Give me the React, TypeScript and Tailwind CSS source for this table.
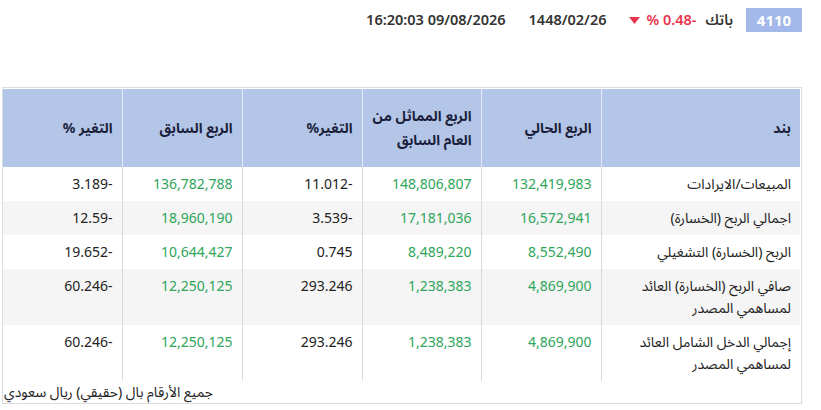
import React from "react";

const font = { fontFamily: '"Noto Sans", "Noto Sans Arabic", "DejaVu Sans", sans-serif' };

type Row = {
  label: string[];
  current: string;
  sameLastYear: string;
  changeYear: string;
  previous: string;
  changePrev: string;
};

const rows: Row[] = [
  { label: ["المبيعات/الايرادات"], current: "132,419,983", sameLastYear: "148,806,807", changeYear: "11.012-", previous: "136,782,788", changePrev: "3.189-" },
  { label: ["اجمالي الربح (الخسارة)"], current: "16,572,941", sameLastYear: "17,181,036", changeYear: "3.539-", previous: "18,960,190", changePrev: "12.59-" },
  { label: ["الربح (الخسارة) التشغيلي"], current: "8,552,490", sameLastYear: "8,489,220", changeYear: "0.745", previous: "10,644,427", changePrev: "19.652-" },
  { label: ["صافي الربح (الخسارة) العائد", "لمساهمي المصدر"], current: "4,869,900", sameLastYear: "1,238,383", changeYear: "293.246", previous: "12,250,125", changePrev: "60.246-" },
  { label: ["إجمالي الدخل الشامل العائد", "لمساهمي المصدر"], current: "4,869,900", sameLastYear: "1,238,383", changeYear: "293.246", previous: "12,250,125", changePrev: "60.246-" },
];

const th = "bg-[#b4c6e7] text-right align-middle px-[9px] font-bold text-[14px] leading-6 text-[#1b1f3b] border-l border-[#e4eaf6]";
const td = "text-right align-top px-[9px] py-[6px] text-[14px] leading-[22px] border-l border-[#dadada]";

function Num({ v, green }: { v: string; green?: boolean }) {
  return (
    <span dir="ltr" className={green ? "text-[#2ea55a]" : "text-[#222]"}>
      {v}
    </span>
  );
}

export default function App() {
  return (
    <div dir="rtl" className="w-[821px] h-[410px] bg-white pl-[2px] pr-[19px]" style={font}>
      {/* top bar */}
      <div className="flex items-center pt-2 h-8 text-[14.5px] text-[#333]">
        <div className="h-6 w-[56px] bg-[#a3b9ea] text-white font-bold text-[15px] flex items-center justify-center">
          4110
        </div>
        <span className="mr-[13px] font-semibold text-[#333]">باتك</span>
        <span dir="ltr" className="mr-[9px] font-semibold text-[#e8344e]">% 0.48-</span>
        <svg className="mr-[7px]" width="11" height="7" viewBox="0 0 11 7">
          <path d="M0 0 H11 L5.5 7 Z" fill="#e8344e" />
        </svg>
        <span dir="ltr" className="mr-[22px] font-semibold text-[#333]">1448/02/26</span>
        <span dir="ltr" className="mr-[23px] font-semibold text-[#333]">16:20:03 09/08/2026</span>
      </div>

      {/* table box */}
      <div className="mt-[55px] border border-[#dcdcdc] p-px">
        <table className="w-[797px] border-collapse table-fixed">
          <colgroup>
            <col className="w-[199px]" />
            <col className="w-[120px]" />
            <col className="w-[119px]" />
            <col className="w-[120px]" />
            <col className="w-[120px]" />
            <col className="w-[119px]" />
          </colgroup>
          <thead>
            <tr className="h-[78px]">
              <th className={th}>بند</th>
              <th className={th}>الربع الحالي</th>
              <th className={th}>
                الربع المماثل من
                <br />
                العام السابق
              </th>
              <th className={th}>التغير%</th>
              <th className={th}>الربع السابق</th>
              <th className={th + " border-l-0"}>التغير %</th>
            </tr>
          </thead>
          <tbody>
            {rows.map((r, i) => (
              <tr key={i} className={i % 2 === 1 ? "bg-[#f5f5f5]" : "bg-white"}>
                <td className={td + " text-[#222]"}>
                  {r.label.map((l, j) => (
                    <div key={j}>{l}</div>
                  ))}
                </td>
                <td className={td}>
                  <Num v={r.current} green />
                </td>
                <td className={td}>
                  <Num v={r.sameLastYear} green />
                </td>
                <td className={td}>
                  <Num v={r.changeYear} />
                </td>
                <td className={td}>
                  <Num v={r.previous} green />
                </td>
                <td className={td + " border-l-0"}>
                  <Num v={r.changePrev} />
                </td>
              </tr>
            ))}
          </tbody>
        </table>
        <div className="text-left text-[14px] leading-5 text-[#222] pt-[1px]">
          <span dir="rtl">جميع الأرقام بال (حقيقي) ريال سعودي</span>
        </div>
      </div>
    </div>
  );
}
